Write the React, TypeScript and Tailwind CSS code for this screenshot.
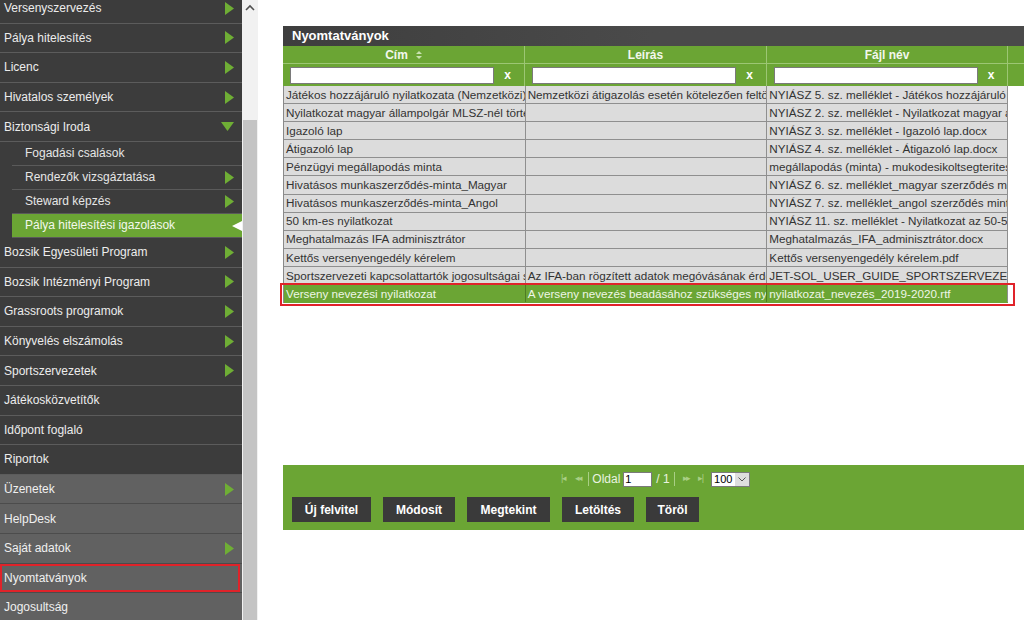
import React from "react";

type Item = { t: string; a?: "r" | "d"; sub?: boolean; sel?: boolean; light?: boolean; red?: boolean };

const items: Item[] = [
  { t: "Versenyszervezés", a: "r" },
  { t: "Pálya hitelesítés", a: "r" },
  { t: "Licenc", a: "r" },
  { t: "Hivatalos személyek", a: "r" },
  { t: "Biztonsági Iroda", a: "d" },
  { t: "Fogadási csalások", sub: true },
  { t: "Rendezők vizsgáztatása", sub: true, a: "r" },
  { t: "Steward képzés", sub: true, a: "r" },
  { t: "Pálya hitelesítési igazolások", sub: true, sel: true },
  { t: "Bozsik Egyesületi Program", a: "r" },
  { t: "Bozsik Intézményi Program", a: "r" },
  { t: "Grassroots programok", a: "r" },
  { t: "Könyvelés elszámolás", a: "r" },
  { t: "Sportszervezetek", a: "r" },
  { t: "Játékosközvetítők" },
  { t: "Időpont foglaló" },
  { t: "Riportok" },
  { t: "Üzenetek", a: "r", light: true },
  { t: "HelpDesk", light: true },
  { t: "Saját adatok", a: "r", light: true },
  { t: "Nyomtatványok", light: true, red: true },
  { t: "Jogosultság", light: true },
];

const rows: [string, string, string][] = [
  ["Játékos hozzájáruló nyilatkozata (Nemzetközi)", "Nemzetközi átigazolás esetén kötelezően feltöltendő dokumentum", "NYIÁSZ 5. sz. melléklet - Játékos hozzájáruló nyilatkozata.docx"],
  ["Nyilatkozat magyar állampolgár MLSZ-nél történő regisztrációjához", "", "NYIÁSZ 2. sz. melléklet - Nyilatkozat magyar állampolgár.docx"],
  ["Igazoló lap", "", "NYIÁSZ 3. sz. melléklet - Igazoló lap.docx"],
  ["Átigazoló lap", "", "NYIÁSZ 4. sz. melléklet - Átigazoló lap.docx"],
  ["Pénzügyi megállapodás minta", "", "megállapodás (minta) - mukodesikoltsegteritese.docx"],
  ["Hivatásos munkaszerződés-minta_Magyar", "", "NYIÁSZ 6. sz. melléklet_magyar szerződés minta.docx"],
  ["Hivatásos munkaszerződés-minta_Angol", "", "NYIÁSZ 7. sz. melléklet_angol szerződés minta.docx"],
  ["50 km-es nyilatkozat", "", "NYIÁSZ 11. sz. melléklet - Nyilatkozat az 50-50 km.docx"],
  ["Meghatalmazás IFA adminisztrátor", "", "Meghatalmazás_IFA_adminisztrátor.docx"],
  ["Kettős versenyengedély kérelem", "", "Kettős versenyengedély kérelem.pdf"],
  ["Sportszervezeti kapcsolattartók jogosultságai sportszervezetnél", "Az IFA-ban rögzített adatok megóvásának érdekében", "JET-SOL_USER_GUIDE_SPORTSZERVEZET.pdf"],
  ["Verseny nevezési nyilatkozat", "A verseny nevezés beadásához szükséges nyilatkozat", "nyilatkozat_nevezés_2019-2020.rtf"],
];

function ArrowRight() {
  return (
    <svg width="9" height="13" viewBox="0 0 9 13" className="shrink-0">
      <path d="M0 0 L9 6.5 L0 13 Z" fill="#6fae35" />
    </svg>
  );
}
function ArrowDown() {
  return (
    <svg width="13" height="9" viewBox="0 0 13 9" className="shrink-0">
      <path d="M0 0 L13 0 L6.5 9 Z" fill="#6fae35" />
    </svg>
  );
}

function Sidebar() {
  return (
    <div className="w-[242px] h-[620px] overflow-hidden bg-[#3c3c3c] shrink-0">
      <div className="-mt-[6px]">
        {items.map((it, i) => {
          if (it.sub) {
            return (
              <div key={i} className="h-[24px] pl-[12px] bg-[#3c3c3c]">
                <div
                  className={
                    "relative h-full flex items-center pl-[13px] pr-[8px] border-b border-[#5a5a5a] " +
                    (it.sel ? "bg-[#6ba534] text-[#f3f8ec]" : "text-[#e6e6e6]")
                  }
                >
                  <span className="flex-1 text-[12px] leading-none">{it.t}</span>
                  {it.a === "r" && <ArrowRight />}
                  {it.sel && (
                    <svg width="10" height="10" viewBox="0 0 10 10" className="absolute right-0 top-[7px]">
                      <path d="M10 0 L0 5 L10 10 Z" fill="#ffffff" />
                    </svg>
                  )}
                </div>
              </div>
            );
          }
          return (
            <div
              key={i}
              className={
                "relative h-[29.6px] flex items-center pl-[4px] pr-[8px] border-b " +
                (it.light ? "bg-[#616161] border-[#4c4c4c] text-[#f0f0f0]" : "bg-[#3c3c3c] border-[#5c5c5c] text-[#ececec]")
              }
            >
              <span className="flex-1 text-[12px] leading-none">{it.t}</span>
              {it.a === "r" && <ArrowRight />}
              {it.a === "d" && <ArrowDown />}
              {it.red && <div className="absolute left-0 top-0 bottom-0 right-[2px] border-2 border-[#e0232a]" />}
            </div>
          );
        })}
      </div>
    </div>
  );
}

function Scrollbar() {
  return (
    <div className="w-[16px] h-[620px] bg-[#f1f1f1] shrink-0 flex flex-col items-center">
      <svg width="10" height="8" viewBox="0 0 10 8" className="mt-[4px]">
        <path d="M1 6 L5 2 L9 6" stroke="#505050" strokeWidth="1.6" fill="none" />
      </svg>
      <div className="mt-[108px] w-[14px] flex-1 bg-[#c4c4c4]" />
    </div>
  );
}

function FilterCell({ w }: { w: string }) {
  return (
    <div className={w + " h-full flex items-center pl-[7px] pr-[3px] border-r border-[#9cc674]"}>
      <div className="w-[204px] h-[17px] bg-white border border-[#7a7a7a]" />
      <div className="flex-1 text-center text-white font-bold text-[12px]">x</div>
    </div>
  );
}

function Grid() {
  return (
    <div className="flex flex-col w-[741px]">
      <div className="h-[20px] bg-gradient-to-r from-[#3e3e3e] via-[#4a4a4a] to-[#4a4a4a] flex items-center pl-[9px]">
        <span className="text-white font-bold text-[13px]">Nyomtatványok</span>
      </div>
      <div className="h-[18px] bg-[#6ba534] flex border-b border-[#9cc674] text-[#f2f7ec] font-bold text-[12px]">
        <div className="w-[242px] border-r border-[#9cc674] flex items-center justify-center gap-[8px]">
          <span>Cím</span>
          <svg width="6" height="8" viewBox="0 0 6 8">
            <path d="M0 3 L3 0 L6 3 Z" fill="#c9e2b0" />
            <path d="M0 5 L3 8 L6 5 Z" fill="#c9e2b0" />
          </svg>
        </div>
        <div className="w-[242px] border-r border-[#9cc674] flex items-center justify-center">Leírás</div>
        <div className="w-[241px] border-r border-[#9cc674] flex items-center justify-center">Fájl név</div>
        <div className="flex-1" />
      </div>
      <div className="h-[22px] bg-[#6ba534] flex">
        <FilterCell w="w-[242px]" />
        <FilterCell w="w-[242px]" />
        <FilterCell w="w-[241px]" />
        <div className="flex-1" />
      </div>
      <div className="h-[379px] bg-white">
        <div className="w-[725px] border-l border-[#8a8a8a]">
          {rows.map((r, i) => {
            const sel = i === rows.length - 1;
            return (
              <div
                key={i}
                className={
                  "relative h-[18.1px] flex border-b text-[11.7px] leading-none " +
                  (sel ? "bg-[#6ba534] text-[#eef6e6] border-[#6ba534]" : "bg-[#dcdcdc] text-[#333333] border-[#8f8f8f]")
                }
              >
                <div className={"w-[242px] overflow-hidden whitespace-nowrap px-[2px] flex items-center border-r " + (sel ? "border-[#4e7d24]" : "border-[#8f8f8f]")}>{r[0]}</div>
                <div className={"w-[242px] overflow-hidden whitespace-nowrap px-[2px] flex items-center border-r " + (sel ? "border-[#4e7d24]" : "border-[#8f8f8f]")}>{r[1]}</div>
                <div className="w-[241px] overflow-hidden whitespace-nowrap px-[2px] flex items-center border-r border-[#8f8f8f]">{r[2]}</div>
                {sel && <div className="absolute -left-[4px] -right-[7px] -top-[2px] -bottom-[4px] border-2 border-[#e0232a]" />}
              </div>
            );
          })}
        </div>
      </div>
      <div className="h-[65px] bg-[#6ba534] flex flex-col">
        <div className="h-[28px] flex items-center text-[12px] text-[#eaf3e0]">
          <div className="w-[278px]" />
          <span className="text-[#a9cf85] text-[9px] tracking-[-1px]">|◂</span>
          <span className="ml-[9px] text-[#a9cf85] text-[9px] tracking-[-2px]">◂◂</span>
          <span className="ml-[7px] w-px h-[14px] bg-[#a9cf85]" />
          <span className="ml-[3px]">Oldal</span>
          <div className="ml-[3px] w-[29px] h-[15px] bg-white border border-[#7a7a7a] text-[11px] text-black leading-[13px] pl-[1px]">1</div>
          <span className="ml-[4px]">/ 1</span>
          <span className="ml-[4px] w-px h-[14px] bg-[#a9cf85]" />
          <span className="ml-[8px] text-[#a9cf85] text-[9px] tracking-[-2px]">▸▸</span>
          <span className="ml-[9px] text-[#a9cf85] text-[9px] tracking-[-1px]">▸|</span>
          <div className="ml-[8px] w-[39px] h-[15px] bg-white border border-[#7a7a7a] flex items-center">
            <span className="flex-1 text-[11px] text-black pl-[2px] leading-none">100</span>
            <div className="w-[14px] h-full bg-[#dedede] flex items-center justify-center">
              <svg width="8" height="5" viewBox="0 0 8 5"><path d="M0.5 0.5 L4 4 L7.5 0.5" stroke="#555" fill="none" /></svg>
            </div>
          </div>
        </div>
        <div className="flex items-center gap-[12px] pl-[9px] mt-[4px]">
          {["Új felvitel", "Módosít", "Megtekint", "Letöltés", "Töröl"].map((b, i) => (
            <div
              key={b}
              className={
                "h-[25px] bg-[#3a3a3a] text-white font-bold text-[12px] flex items-center justify-center " +
                ["w-[79px]", "w-[72px]", "w-[83px]", "w-[72px]", "w-[53px]"][i]
              }
            >
              {b}
            </div>
          ))}
        </div>
      </div>
    </div>
  );
}

export default function App() {
  return (
    <div className="w-[1024px] h-[620px] overflow-hidden flex bg-white font-['Liberation_Sans',Arial,sans-serif]">
      <Sidebar />
      <Scrollbar />
      <div className="flex-1 pl-[25px] pt-[26px] overflow-hidden">
        <Grid />
      </div>
    </div>
  );
}
